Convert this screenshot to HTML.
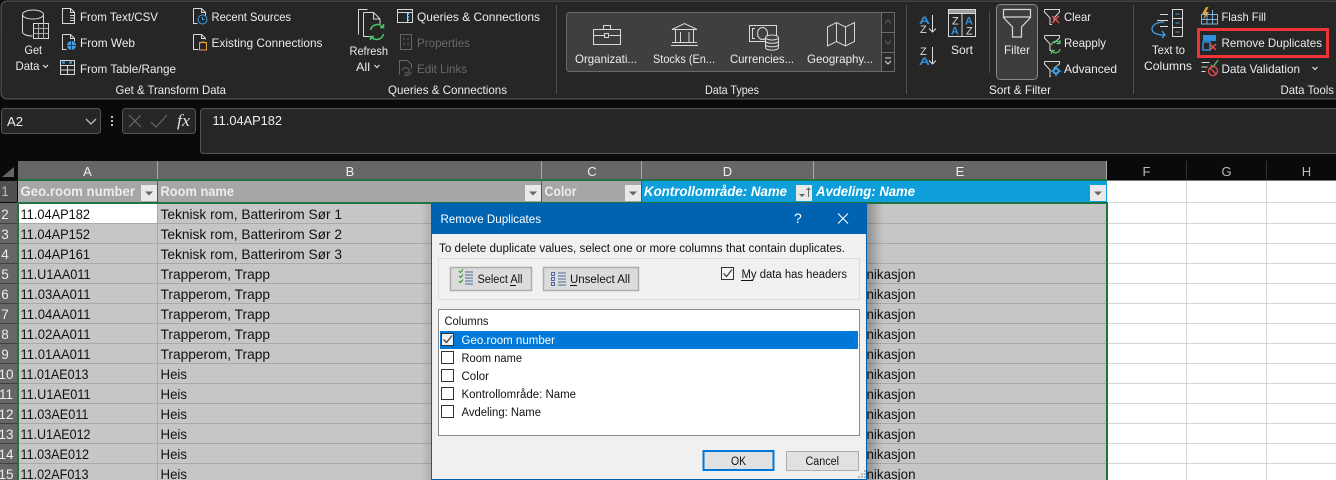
<!DOCTYPE html>
<html><head><meta charset="utf-8"><title>Remove Duplicates</title>
<style>
html,body{margin:0;padding:0;background:#0a0a0a;overflow:hidden}
svg{display:block;font-family:"Liberation Sans",sans-serif}
.r text{font-size:12px;fill:#ececec}
.g text{font-size:14px;fill:#111}
.d text{font-size:11.5px;fill:#111}
.i{fill:none;stroke:#d8d8d8;stroke-width:1}
</style></head><body>
<svg width="1336" height="480" viewBox="0 0 1336 480" xmlns="http://www.w3.org/2000/svg">
<rect width="1336" height="480" fill="#0a0a0a"/>
<!-- ribbon -->
<rect x="1" y="1" width="1340" height="98" rx="6" fill="#262626" stroke="#5c5c5c"/>
<g fill="#505050"><rect x="556" y="5" width="1" height="89"/><rect x="906" y="5" width="1" height="89"/><rect x="989" y="11" width="1" height="62"/><rect x="1133" y="5" width="1" height="89"/></g>
<rect x="566.500" y="12.500" width="328" height="59" rx="3" fill="#3f3f3f" stroke="#6a6a6a"/>
<g fill="#2a2a2a" stroke="#6a6a6a"><rect x="881.500" y="12.500" width="13" height="20"/><rect x="881.500" y="32.500" width="13" height="20"/><rect x="881.500" y="52.500" width="13" height="19"/></g>
<path d="M885 23l3-3 3 3M885 41l3 3 3-3" fill="none" stroke="#666"/>
<path d="M885 58h6M885 61l3 3 3-3" fill="none" stroke="#e0e0e0"/>
<rect x="996.500" y="4.500" width="41" height="75" rx="4" fill="#3d3d3d" stroke="#8a8a8a"/>
<rect x="1198.500" y="29.500" width="129" height="27" fill="none" stroke="#ee3338" stroke-width="3"/>
<g class="r">
<text x="24.500" y="54" textLength="17.500" lengthAdjust="spacingAndGlyphs">Get</text>
<text x="15.500" y="70" textLength="24" lengthAdjust="spacingAndGlyphs">Data</text>
<text x="80" y="21" textLength="78" lengthAdjust="spacingAndGlyphs">From Text/CSV</text>
<text x="80" y="47" textLength="55" lengthAdjust="spacingAndGlyphs">From Web</text>
<text x="80" y="73" textLength="96" lengthAdjust="spacingAndGlyphs">From Table/Range</text>
<text x="211.500" y="21" textLength="79.500" lengthAdjust="spacingAndGlyphs">Recent Sources</text>
<text x="211.500" y="47" textLength="111" lengthAdjust="spacingAndGlyphs">Existing Connections</text>
<text x="115.500" y="94" textLength="110.500" lengthAdjust="spacingAndGlyphs">Get &amp; Transform Data</text>
<text x="349.500" y="55" textLength="38.500" lengthAdjust="spacingAndGlyphs">Refresh</text>
<text x="356" y="71" textLength="14" lengthAdjust="spacingAndGlyphs">All</text>
<text x="417" y="21" textLength="123" lengthAdjust="spacingAndGlyphs">Queries &amp; Connections</text>
<text x="417" y="47" textLength="53" lengthAdjust="spacingAndGlyphs" style="fill:#686868">Properties</text>
<text x="417" y="73" textLength="50" lengthAdjust="spacingAndGlyphs" style="fill:#686868">Edit Links</text>
<text x="388" y="94" textLength="119" lengthAdjust="spacingAndGlyphs">Queries &amp; Connections</text>
<text x="575" y="63" textLength="62" lengthAdjust="spacingAndGlyphs">Organizati...</text>
<text x="653" y="63" textLength="62" lengthAdjust="spacingAndGlyphs">Stocks (En...</text>
<text x="730" y="63" textLength="64" lengthAdjust="spacingAndGlyphs">Currencies...</text>
<text x="807" y="63" textLength="66" lengthAdjust="spacingAndGlyphs">Geography...</text>
<text x="705" y="94" textLength="54" lengthAdjust="spacingAndGlyphs">Data Types</text>
<text x="951" y="54" textLength="22" lengthAdjust="spacingAndGlyphs">Sort</text>
<text x="1004" y="54" textLength="26" lengthAdjust="spacingAndGlyphs">Filter</text>
<text x="989" y="94" textLength="62" lengthAdjust="spacingAndGlyphs">Sort &amp; Filter</text>
<text x="1064" y="21" textLength="27" lengthAdjust="spacingAndGlyphs">Clear</text>
<text x="1064" y="47" textLength="42" lengthAdjust="spacingAndGlyphs">Reapply</text>
<text x="1064" y="73" textLength="53" lengthAdjust="spacingAndGlyphs">Advanced</text>
<text x="1152" y="54" textLength="33" lengthAdjust="spacingAndGlyphs">Text to</text>
<text x="1144" y="70" textLength="48" lengthAdjust="spacingAndGlyphs">Columns</text>
<text x="1221.500" y="21" textLength="44.500" lengthAdjust="spacingAndGlyphs">Flash Fill</text>
<text x="1221.500" y="47" textLength="100.500" lengthAdjust="spacingAndGlyphs">Remove Duplicates</text>
<text x="1221.500" y="73" textLength="78.500" lengthAdjust="spacingAndGlyphs">Data Validation</text>
<text x="1280.500" y="94" textLength="53.500" lengthAdjust="spacingAndGlyphs">Data Tools</text>
</g>
<!-- chevrons -->
<path d="M43 65l2.500 2.500 2.500-2.500M374.500 65l2.500 2.500 2.500-2.500M1312.500 67l2.500 2.500 2.500-2.500" fill="none" stroke="#ddd" stroke-width="1.200"/>
<!-- ribbon icons -->
<g class="i">
<path d="M22.500 15v17c0 2 4 4 10 4M43.500 15v8"/><ellipse cx="33" cy="14.500" rx="10.500" ry="4.500"/>
<rect x="33.500" y="23.500" width="15" height="15" fill="#262626"/><path d="M33.500 28.500h15M33.500 33.500h15M38.500 23.500v15M43.500 23.500v15" stroke="#aaa"/>
<path d="M62.500 8.500h8l4 4v11h-12zM70.500 8.500v4h4"/><path d="M70 15.500h5M70 18h5M70 20.500h5" />
<path d="M62.500 34.500h8l4 4v3M62.500 34.500v15h4M70.500 34.500v4h4"/>
<rect x="60.500" y="60.500" width="14" height="14"/><path d="M60.500 65.500h14M60.500 70h14M67.500 65.500v9"/>
<path d="M193.500 8.500h8l4 4v3M193.500 8.500v15h4M201.500 8.500v4h4"/>
<path d="M193.500 34.500h8l4 4v1M193.500 34.500v15h5M201.500 34.500v4h4"/>
<rect x="397.500" y="9.500" width="15" height="13"/><path d="M397.500 12.500h15M407.500 12.500v10"/>
<path d="M358.500 34.500v-25h9M363.500 12.500h10l6.500 6.500v5M363.500 12.500v24h6M373.500 12.500v6.500h6.500"/>
<path d="M593.500 29.500h27v15h-27zM593.500 35.500h11M609.500 35.500h11M603.500 29.500v-4h7v4"/><rect x="604.500" y="33.500" width="4" height="4"/>
<path d="M672 29.500l12.500-6 12.500 6zM675.500 29.500v13M680.500 32v10M689 32v10M693.500 29.500v13M672 42.500h25M671 45.500h27"/>
<rect x="749.500" y="25.500" width="27" height="16"/><path d="M755 28.500h-2.500v10h2.500"/><ellipse cx="762.500" cy="33.500" rx="5" ry="6"/>
<path d="M765.500 37.500v10c0 3.500 13 3.500 13 0v-10" fill="#3f3f3f"/><ellipse cx="772" cy="37.500" rx="6.500" ry="2.500" fill="#3f3f3f"/><path d="M765.500 41c0 3 13 3 13 0M765.500 44.500c0 3 13 3 13 0"/>
<path d="M827.500 27l9-4.500 9 4.500 9-4.500v19l-9 4.500-9-4.500-9 4.500zM836.500 22.500v19M845.500 27v19"/>
<rect x="948.500" y="9.500" width="27" height="27"/><path d="M962 13.500v23"/>
<rect x="948.500" y="9.500" width="27" height="4" fill="#a0a0a0"/>
<path d="M1003.500 9.500h27v8l-9 9.500v10h-9v-10l-9-9.500zM1003.500 17h27" stroke-width="1.200"/>
<path d="M1044.500 9.500h15v2.500l-5.500 6v2M1044.500 9.500v2.500l5.500 6v6.500h2"/>
<path d="M1044.500 35.500h15v2.500l-5.500 5M1044.500 35.500v2.500l5.500 6v6.500h1"/>
<path d="M1044.500 61.500h15v2.500l-5.500 4M1044.500 61.500v2.500l5.500 6v6.500h1"/>
<path d="M1160 14.500h8M1157 20.500h11M1160 26.500h8"/>
<rect x="1172.500" y="9.500" width="10" height="27"/><path d="M1172.500 18.500h10M1172.500 27.500h10"/>
<path d="M1201.500 14.500h16v9.500h-16zM1207 14.500v9.500M1212.500 10v14M1201.500 19.500h16" stroke="#7fb4e0"/>
<path d="M1201.500 62.500h8M1201.500 67h6M1201.500 71.500h4"/>
</g>
<path d="M1206 7l-4 7h3l-2 6 6-8h-3l2.500-5z" fill="#e8a33d"/>
<g fill="none" stroke="#e8a33d"><path d="M199.500 42.500v7.500h7v-7.500z" fill="#262626"/><path d="M199.500 43.500c2-2 5-2 7 0"/></g>
<!-- blue accents -->
<g fill="none" stroke="#3f9fe6">
<circle cx="71.500" cy="45.500" r="4.500" fill="#3f9fe6" stroke="none"/>
<path d="M67 45.500h9M71.500 41v9" stroke="#262626" stroke-width=".8"/>
<circle cx="202.500" cy="19.500" r="4.500" fill="#262626"/><path d="M202.500 17v2.500h2"/>
<path d="M62 62.500h3M69 62.500h3" stroke-width="2"/>
<path d="M408.500 13v9" stroke-width="1.500" stroke-dasharray="2 1"/>
<path d="M1164 22c-7 0-12 3-12 7 0 4 5 6 12 6M1162 31l3 4-3 3" stroke-width="1.300"/>
<path d="M1175.500 14h4M1175.500 23h4M1175.500 32h4"/>
<circle cx="1056" cy="71" r="2.500" stroke-width="2.200"/>
<path d="M1056 66v2M1056 74v2M1051 71h2M1059 71h2" stroke-width="1.500"/>
</g>
<rect x="1203" y="35" width="13" height="6" fill="#2f8fdc"/>
<rect x="1203" y="42" width="7" height="8" fill="none" stroke="#2f8fdc" stroke-width="1.500"/>
<path d="M1210 44l6 6M1216 44l-6 6M1052 16l7 7M1059 16l-7 7" stroke="#e9504f" stroke-width="1.300"/>
<path d="M1211 65l2 2 5-7" fill="none" stroke="#57c26a" stroke-width="1.300"/>
<circle cx="1213" cy="71" r="4.500" fill="none" stroke="#e9504f" stroke-width="1.300"/><path d="M1210 68l6 6" stroke="#e9504f" stroke-width="1.300"/>
<path d="M1051.500 45a4.500 4.500 0 0 1 8-2M1060 49a4.500 4.500 0 0 1-8 2M1060 40v3.500h-3.500M1051.500 54v-3.500h3.500" fill="none" stroke="#57c26a" stroke-width="1.300"/>
<path d="M370.500 30a7 7 0 0 1 12.500-2.500M383.500 34a7 7 0 0 1-12.500 2.500M383.500 24v3.500h-3.500M370.500 40v-3.500h3.500" fill="none" stroke="#4fc36a" stroke-width="1.500"/>
<g font-weight="bold" font-size="11" fill="#2f8fdc">
<text x="919" y="24" textLength="11" lengthAdjust="spacingAndGlyphs">A</text><text x="919" y="65" textLength="11" lengthAdjust="spacingAndGlyphs">A</text>
<text x="965" y="24.500">A</text><text x="951" y="34.500">A</text>
</g>
<g fill="#ddd" font-size="11">
<text x="920" y="33">Z</text><text x="920" y="55">Z</text>
<text x="952" y="24.500">Z</text><text x="966" y="34.500">Z</text>
</g>
<path d="M932.500 15v17M929 28.500l3.500 3.500 3.500-3.500M932.500 47v17M929 60.500l3.500 3.500 3.500-3.500" fill="none" stroke="#ddd"/>
<g fill="none" stroke="#666"><rect x="400.500" y="34.500" width="11" height="15"/><path d="M403 39h2M403 44h2M407 39h2M407 44h2M399.500 74.500v-14h8l4 4v4M402 70c2-3 6-3 7 0s-3 4-4 2M404 75c3 1 7 0 7-3"/></g>
<!-- formula -->
<rect x="1.500" y="108.500" width="99" height="25" rx="3" fill="#262626" stroke="#555"/>
<rect x="122.500" y="108.500" width="73" height="25" rx="3" fill="#262626" stroke="#555"/>
<rect x="200.500" y="108.500" width="1140" height="45" rx="3" fill="#262626" stroke="#555"/>
<text x="7" y="126" font-size="12.500" fill="#eee" textLength="16" lengthAdjust="spacingAndGlyphs">A2</text>
<path d="M86 119l5 5 5-5" fill="none" stroke="#bbb" stroke-width="1.300"/>
<g fill="#bbb"><rect x="111" y="116" width="2" height="2"/><rect x="111" y="120" width="2" height="2"/><rect x="111" y="124" width="2" height="2"/></g>
<path d="M129 115l12 12M141 115l-12 12M151 122l5 5 11-12" fill="none" stroke="#666" stroke-width="1.200"/>
<text x="177" y="126" font-size="17" font-style="italic" font-family="Liberation Serif" fill="#ddd" textLength="13" lengthAdjust="spacingAndGlyphs">fx</text>
<text x="212.500" y="125" font-size="12.500" fill="#eee" textLength="69.500" lengthAdjust="spacingAndGlyphs">11.04AP182</text>
<!-- column headers -->
<rect x="0" y="161" width="1336" height="19" fill="#0a0a0a"/>
<rect x="18" y="161" width="1089" height="19" fill="#666"/>
<path d="M14 167v10h-12z" fill="#666"/>
<g fill="#a8a8a8"><rect x="157" y="161" width="1" height="19"/><rect x="541" y="161" width="1" height="19"/><rect x="641" y="161" width="1" height="19"/><rect x="813" y="161" width="1" height="19"/><rect x="1106" y="161" width="1" height="19"/></g>
<g fill="#333"><rect x="1186" y="161" width="1" height="19"/><rect x="1266" y="161" width="1" height="19"/></g>
<g font-size="13" text-anchor="middle" fill="#eee"><text x="87.500" y="176">A</text><text x="350" y="176">B</text><text x="592" y="176">C</text><text x="727.500" y="176">D</text><text x="960" y="176">E</text></g>
<g font-size="13" text-anchor="middle" fill="#bbb"><text x="1146.500" y="176">F</text><text x="1226.500" y="176">G</text><text x="1306.500" y="176">H</text></g>
<rect x="1107" y="180" width="229" height="1" fill="#777"/>
<!-- sheet white -->
<rect x="1107" y="181" width="229" height="299" fill="#fff"/>
<g fill="#d6d6d6">
<rect x="1186" y="181" width="1" height="299"/><rect x="1266" y="181" width="1" height="299"/>
<rect x="1108" y="202" width="228" height="1"/><rect x="1108" y="223" width="228" height="1"/><rect x="1108" y="243" width="228" height="1"/><rect x="1108" y="263" width="228" height="1"/><rect x="1108" y="283" width="228" height="1"/><rect x="1108" y="303" width="228" height="1"/><rect x="1108" y="323" width="228" height="1"/><rect x="1108" y="343" width="228" height="1"/><rect x="1108" y="363" width="228" height="1"/><rect x="1108" y="383" width="228" height="1"/><rect x="1108" y="403" width="228" height="1"/><rect x="1108" y="423" width="228" height="1"/><rect x="1108" y="443" width="228" height="1"/><rect x="1108" y="463" width="228" height="1"/>
</g>
<!-- row 1 -->
<rect x="18" y="181" width="623" height="21" fill="#a6a6a6"/>
<rect x="642" y="181" width="465" height="21" fill="#0e9fdb"/>
<rect x="157" y="181" width="1" height="21" fill="#555"/><rect x="541" y="181" width="1" height="21" fill="#555"/><rect x="641" y="181" width="1" height="21" fill="#555"/>
<!-- data -->
<rect x="19" y="204" width="1087" height="276" fill="#c6c6c6"/>
<rect x="19" y="204" width="138" height="19" fill="#fff"/>
<g fill="#a9a9a9">
<rect x="19" y="223" width="1087" height="1"/><rect x="19" y="243" width="1087" height="1"/><rect x="19" y="263" width="1087" height="1"/><rect x="19" y="283" width="1087" height="1"/><rect x="19" y="303" width="1087" height="1"/><rect x="19" y="323" width="1087" height="1"/><rect x="19" y="343" width="1087" height="1"/><rect x="19" y="363" width="1087" height="1"/><rect x="19" y="383" width="1087" height="1"/><rect x="19" y="403" width="1087" height="1"/><rect x="19" y="423" width="1087" height="1"/><rect x="19" y="443" width="1087" height="1"/><rect x="19" y="463" width="1087" height="1"/>
<rect x="157" y="204" width="1" height="276"/><rect x="541" y="204" width="1" height="276"/><rect x="641" y="204" width="1" height="276"/><rect x="813" y="204" width="1" height="276"/>
</g>
<!-- row headers -->
<rect x="0" y="181" width="17" height="21" fill="#505050"/>
<rect x="0" y="203" width="17" height="277" fill="#666"/>
<g fill="#404040"><rect x="0" y="223" width="17" height="1"/><rect x="0" y="243" width="17" height="1"/><rect x="0" y="263" width="17" height="1"/><rect x="0" y="283" width="17" height="1"/><rect x="0" y="303" width="17" height="1"/><rect x="0" y="323" width="17" height="1"/><rect x="0" y="343" width="17" height="1"/><rect x="0" y="363" width="17" height="1"/><rect x="0" y="383" width="17" height="1"/><rect x="0" y="403" width="17" height="1"/><rect x="0" y="423" width="17" height="1"/><rect x="0" y="443" width="17" height="1"/><rect x="0" y="463" width="17" height="1"/></g>
<g font-size="13.500" fill="#eee" text-anchor="middle">
<text x="5" y="196" fill="#bbb">1</text><text x="5" y="219">2</text><text x="5" y="239">3</text><text x="5" y="259">4</text><text x="5" y="279">5</text><text x="5" y="299">6</text><text x="5" y="319">7</text><text x="5" y="339">8</text><text x="5" y="359">9</text><text x="6" y="379">10</text><text x="6" y="399">11</text><text x="6" y="419">12</text><text x="6" y="439">13</text><text x="6" y="459">14</text><text x="6" y="479">15</text>
</g>
<!-- green selection -->
<g fill="#217346"><rect x="18" y="179" width="1089" height="2"/><rect x="17" y="202" width="1091" height="2"/><rect x="17" y="202" width="2" height="278"/><rect x="1106" y="202" width="2" height="278"/></g>
<!-- header text -->
<g font-size="13.500" font-weight="bold" fill="#ececec">
<text x="20.500" y="196" textLength="114.500" lengthAdjust="spacingAndGlyphs">Geo.room number</text>
<text x="160.500" y="196" textLength="73.500" lengthAdjust="spacingAndGlyphs">Room name</text>
<text x="544.500" y="196" textLength="32" lengthAdjust="spacingAndGlyphs">Color</text>
</g>
<g font-size="13.500" font-weight="bold" font-style="italic" fill="#fff">
<text x="644" y="196" textLength="143" lengthAdjust="spacingAndGlyphs">Kontrollområde: Name</text>
<text x="816" y="196" textLength="99" lengthAdjust="spacingAndGlyphs">Avdeling: Name</text>
</g>
<g fill="#e9e9e9"><rect x="141" y="185" width="16" height="16"/><rect x="525" y="185" width="16" height="16"/><rect x="625" y="185" width="16" height="16"/><rect x="796" y="185" width="16" height="16"/><rect x="1090" y="185" width="16" height="16"/></g>
<path d="M145 191.500h8l-4 4zM529 191.500h8l-4 4zM629 191.500h8l-4 4zM1094 191.500h8l-4 4zM799 194h6l-3 3z" fill="#666"/>
<path d="M808.500 188v9M806.500 190l2-2 2 2" fill="none" stroke="#666"/>
<!-- data text -->
<g class="g">
<text x="20.500" y="219" textLength="69.500" lengthAdjust="spacingAndGlyphs">11.04AP182</text>
<text x="20.500" y="239" textLength="69.500" lengthAdjust="spacingAndGlyphs">11.04AP152</text>
<text x="20.500" y="259" textLength="69.500" lengthAdjust="spacingAndGlyphs">11.04AP161</text>
<text x="20.500" y="279" textLength="70" lengthAdjust="spacingAndGlyphs">11.U1AA011</text>
<text x="20.500" y="299" textLength="70" lengthAdjust="spacingAndGlyphs">11.03AA011</text>
<text x="20.500" y="319" textLength="70" lengthAdjust="spacingAndGlyphs">11.04AA011</text>
<text x="20.500" y="339" textLength="70" lengthAdjust="spacingAndGlyphs">11.02AA011</text>
<text x="20.500" y="359" textLength="70" lengthAdjust="spacingAndGlyphs">11.01AA011</text>
<text x="20.500" y="379" textLength="68" lengthAdjust="spacingAndGlyphs">11.01AE013</text>
<text x="20.500" y="399" textLength="70" lengthAdjust="spacingAndGlyphs">11.U1AE011</text>
<text x="20.500" y="419" textLength="68" lengthAdjust="spacingAndGlyphs">11.03AE011</text>
<text x="20.500" y="439" textLength="70" lengthAdjust="spacingAndGlyphs">11.U1AE012</text>
<text x="20.500" y="459" textLength="68.500" lengthAdjust="spacingAndGlyphs">11.03AE012</text>
<text x="20.500" y="479" textLength="68" lengthAdjust="spacingAndGlyphs">11.02AF013</text>
<text x="160.500" y="219" textLength="181.500" lengthAdjust="spacingAndGlyphs">Teknisk rom, Batterirom Sør 1</text>
<text x="160.500" y="239" textLength="181.500" lengthAdjust="spacingAndGlyphs">Teknisk rom, Batterirom Sør 2</text>
<text x="160.500" y="259" textLength="181.500" lengthAdjust="spacingAndGlyphs">Teknisk rom, Batterirom Sør 3</text>
<text x="160.500" y="279" textLength="109.500" lengthAdjust="spacingAndGlyphs">Trapperom, Trapp</text>
<text x="160.500" y="299" textLength="109.500" lengthAdjust="spacingAndGlyphs">Trapperom, Trapp</text>
<text x="160.500" y="319" textLength="109.500" lengthAdjust="spacingAndGlyphs">Trapperom, Trapp</text>
<text x="160.500" y="339" textLength="109.500" lengthAdjust="spacingAndGlyphs">Trapperom, Trapp</text>
<text x="160.500" y="359" textLength="109.500" lengthAdjust="spacingAndGlyphs">Trapperom, Trapp</text>
<text x="160.500" y="379" textLength="26.500" lengthAdjust="spacingAndGlyphs">Heis</text>
<text x="160.500" y="399" textLength="26.500" lengthAdjust="spacingAndGlyphs">Heis</text>
<text x="160.500" y="419" textLength="26.500" lengthAdjust="spacingAndGlyphs">Heis</text>
<text x="160.500" y="439" textLength="26.500" lengthAdjust="spacingAndGlyphs">Heis</text>
<text x="160.500" y="459" textLength="26.500" lengthAdjust="spacingAndGlyphs">Heis</text>
<text x="160.500" y="479" textLength="26.500" lengthAdjust="spacingAndGlyphs">Heis</text>
<text x="866.500" y="279" textLength="49" lengthAdjust="spacingAndGlyphs">nikasjon</text>
<text x="866.500" y="299" textLength="49" lengthAdjust="spacingAndGlyphs">nikasjon</text>
<text x="866.500" y="319" textLength="49" lengthAdjust="spacingAndGlyphs">nikasjon</text>
<text x="866.500" y="339" textLength="49" lengthAdjust="spacingAndGlyphs">nikasjon</text>
<text x="866.500" y="359" textLength="49" lengthAdjust="spacingAndGlyphs">nikasjon</text>
<text x="866.500" y="379" textLength="49" lengthAdjust="spacingAndGlyphs">nikasjon</text>
<text x="866.500" y="399" textLength="49" lengthAdjust="spacingAndGlyphs">nikasjon</text>
<text x="866.500" y="419" textLength="49" lengthAdjust="spacingAndGlyphs">nikasjon</text>
<text x="866.500" y="439" textLength="49" lengthAdjust="spacingAndGlyphs">nikasjon</text>
<text x="866.500" y="459" textLength="49" lengthAdjust="spacingAndGlyphs">nikasjon</text>
<text x="866.500" y="479" textLength="49" lengthAdjust="spacingAndGlyphs">nikasjon</text>
</g>
<!-- dialog shadow -->
<defs>
<linearGradient id="sr" x1="0" x2="1" y1="0" y2="0"><stop offset="0" stop-color="#000" stop-opacity=".28"/><stop offset="1" stop-color="#000" stop-opacity="0"/></linearGradient>
<linearGradient id="sl" x1="1" x2="0" y1="0" y2="0"><stop offset="0" stop-color="#000" stop-opacity=".12"/><stop offset="1" stop-color="#000" stop-opacity="0"/></linearGradient>
</defs>
<rect x="867" y="204" width="16" height="276" fill="url(#sr)"/>
<rect x="421" y="204" width="10" height="276" fill="url(#sl)"/>
<!-- dialog -->
<rect x="431" y="203" width="436" height="277" fill="#0063b1"/>
<rect x="432" y="234" width="434" height="245" fill="#f0f0f0"/>
<text x="440.500" y="223" font-size="12" fill="#fff" textLength="100.500" lengthAdjust="spacingAndGlyphs">Remove Duplicates</text>
<text x="794" y="223" font-size="14" fill="#fff">?</text>
<path d="M838 213.500l10 10M848 213.500l-10 10" stroke="#fff" fill="none" stroke-width="1.100"/>
<g class="d">
<text x="439" y="252" textLength="406" lengthAdjust="spacingAndGlyphs">To delete duplicate values, select one or more columns that contain duplicates.</text>
</g>
<rect x="438.500" y="258.500" width="421" height="41" fill="#f0f0f0" stroke="#dcdcdc"/>
<rect x="450.500" y="267.500" width="81" height="23" fill="#dcdcdc" stroke="#adadad" stroke-width="1.500"/>
<rect x="543.500" y="267.500" width="95" height="23" fill="#dcdcdc" stroke="#adadad" stroke-width="1.500"/>
<path d="M459 271l1.500 1.500 2.500-3M459 276l1.500 1.500 2.500-3M459 281l1.500 1.500 2.500-3" fill="none" stroke="#3c9a3c" stroke-width="1.200"/>
<path d="M465 272h8M465 275h8M465 278h8M465 281h8M465 284h8" stroke="#4a6a9a" fill="none"/>
<g fill="none" stroke="#4a6a9a"><rect x="551.500" y="272.500" width="3" height="3"/><rect x="551.500" y="277.500" width="3" height="3"/><rect x="551.500" y="282.500" width="3" height="3"/><path d="M558 273h8M558 276h8M558 279h8M558 282h8M558 285h8"/></g>
<g class="d">
<text x="477.500" y="283" textLength="45" lengthAdjust="spacingAndGlyphs">Select All</text>
<text x="570" y="283" textLength="60" lengthAdjust="spacingAndGlyphs">Unselect All</text>
<text x="741.500" y="278" textLength="105.500" lengthAdjust="spacingAndGlyphs">My data has headers</text>
</g>
<g fill="#111"><rect x="510" y="285" width="6" height="1"/><rect x="570" y="285" width="7" height="1"/><rect x="741" y="280" width="12" height="1"/></g>
<rect x="721.500" y="267.500" width="12" height="12" fill="#f4f4f4" stroke="#333"/>
<path d="M723.500 273.500l3 3 5.500-7" fill="none" stroke="#444" stroke-width="1.300"/>
<rect x="438.500" y="309.500" width="421" height="126" fill="#fff" stroke="#8a8a8a"/>
<rect x="440" y="331" width="418" height="18" fill="#0078d7"/>
<text x="444.500" y="325" font-size="11.500" fill="#111" textLength="44" lengthAdjust="spacingAndGlyphs">Columns</text>
<text x="461.500" y="344" font-size="11.500" fill="#fff" textLength="93.500" lengthAdjust="spacingAndGlyphs">Geo.room number</text>
<g class="d">
<text x="461.500" y="362" textLength="60.500" lengthAdjust="spacingAndGlyphs">Room name</text>
<text x="461.500" y="380" textLength="27.500" lengthAdjust="spacingAndGlyphs">Color</text>
<text x="461.500" y="398" textLength="114.500" lengthAdjust="spacingAndGlyphs">Kontrollområde: Name</text>
<text x="461.500" y="416" textLength="79.500" lengthAdjust="spacingAndGlyphs">Avdeling: Name</text>
</g>
<g fill="#fff" stroke="#333"><rect x="441.500" y="333.500" width="12" height="12" fill="#f2f2f2"/><rect x="441.500" y="351.500" width="12" height="12"/><rect x="441.500" y="369.500" width="12" height="12"/><rect x="441.500" y="387.500" width="12" height="12"/><rect x="441.500" y="405.500" width="12" height="12"/></g>
<path d="M443.500 339.500l3 3 5.500-7" fill="none" stroke="#444" stroke-width="1.300"/>
<rect x="703.500" y="451" width="70" height="19" fill="#e1e1e1" stroke="#0078d7" stroke-width="2"/>
<rect x="786.500" y="451.500" width="72" height="19" fill="#e1e1e1" stroke="#adadad"/>
<text x="731" y="465" font-size="11.500" fill="#111" textLength="15" lengthAdjust="spacingAndGlyphs">OK</text>
<text x="805.500" y="465" font-size="11.500" fill="#111" textLength="33.500" lengthAdjust="spacingAndGlyphs">Cancel</text>
<g fill="#b5b5b5"><rect x="864" y="470" width="2" height="2"/><rect x="861" y="473" width="2" height="2"/><rect x="864" y="473" width="2" height="2"/><rect x="858" y="476" width="2" height="2"/><rect x="861" y="476" width="2" height="2"/><rect x="864" y="476" width="2" height="2"/></g>
</svg>
</body></html>
